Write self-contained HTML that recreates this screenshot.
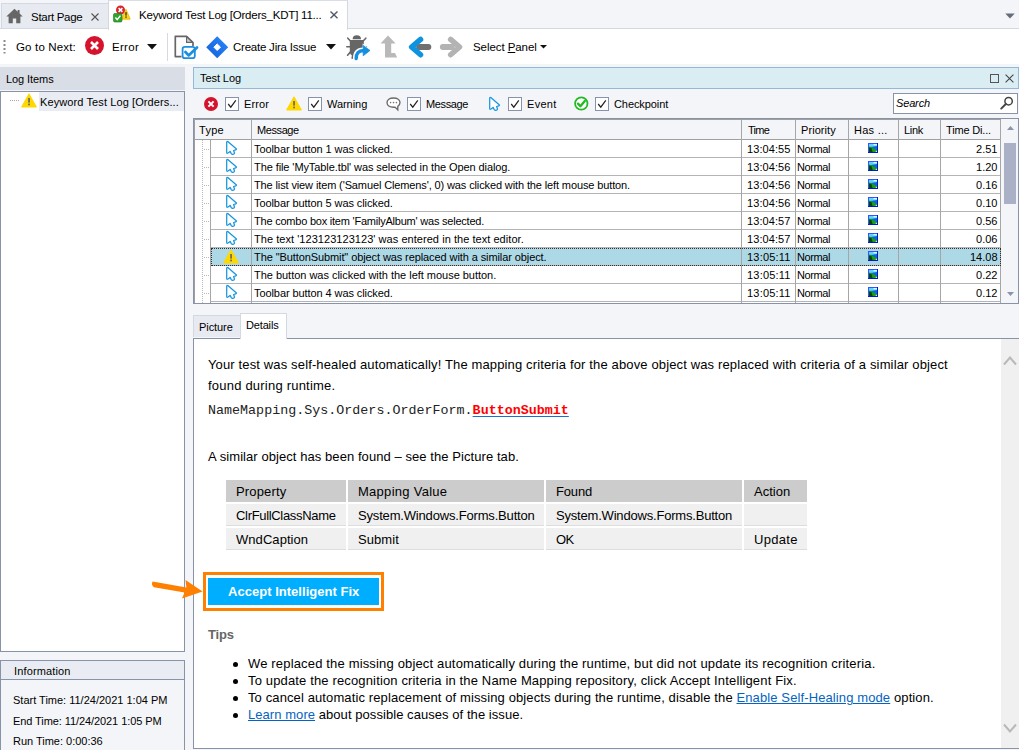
<!DOCTYPE html>
<html><head><meta charset="utf-8">
<style>
*{box-sizing:border-box;margin:0;padding:0}
html,body{width:1019px;height:750px;overflow:hidden;background:#f4f5f8;font-family:"Liberation Sans",sans-serif;font-size:11px;color:#000}
.abs{position:absolute}
#root{position:relative;width:1019px;height:750px;overflow:hidden;background:#f4f5f8}
.t{position:absolute;white-space:nowrap;line-height:14px;height:14px;font-size:11px}
.s{font-size:11.5px;line-height:16px;height:16px}
svg{position:absolute;overflow:visible}
.b{font-size:13px;line-height:17px;height:17px}
.m{font-family:"Liberation Mono",monospace;font-size:13.33px;line-height:17px;height:17px;color:#222}
.tr{height:22px;background:#f0f0f0;border-bottom:1px solid #ddd}
.bl{left:233px;width:5px;height:5px;border-radius:50%;background:#000}
.lk{color:#0563c1;text-decoration:underline}
/*LS*/
#x_tab1{letter-spacing:-0.294px}
#x_tab2{letter-spacing:-0.214px}
#x_goto{letter-spacing:0.163px}
#x_err1{letter-spacing:0.309px}
#x_jira{letter-spacing:-0.227px}
#x_sel{letter-spacing:-0.072px}
#x_logitems{letter-spacing:-0.077px}
#x_tree{letter-spacing:0.102px}
#x_testlog{letter-spacing:-0.071px}
#x_f1{letter-spacing:0.087px}
#x_f2{letter-spacing:-0.044px}
#x_f3{letter-spacing:-0.357px}
#x_f4{letter-spacing:0.290px}
#x_f5{letter-spacing:-0.083px}
#x_b1{letter-spacing:0.139px}
#x_b2{letter-spacing:0.212px}
#x_b3{letter-spacing:0.069px}
#x_mono{letter-spacing:0.020px}
#x_l1{letter-spacing:0.163px}
#x_l2{letter-spacing:0.148px}
#x_l3{letter-spacing:0.113px}
#x_l4{letter-spacing:0.059px}
#x_c00{letter-spacing:0.166px}
#x_c01{letter-spacing:0.278px}
#x_c02{letter-spacing:-0.169px}
#x_c03{letter-spacing:0.012px}
#x_c10{letter-spacing:-0.323px}
#x_c11{letter-spacing:-0.174px}
#x_c12{letter-spacing:-0.193px}
#x_c20{letter-spacing:0.061px}
#x_c21{letter-spacing:0.066px}
#x_c22{letter-spacing:-0.697px}
#x_c23{letter-spacing:0.316px}
#x_btn{letter-spacing:0.026px}
#x_h0{letter-spacing:0.280px}
#x_h1{letter-spacing:-0.407px}
#x_h2{letter-spacing:-0.700px}
#x_h3{letter-spacing:0.067px}
#x_h4{letter-spacing:0.267px}
#x_h5{letter-spacing:-0.329px}
#x_h6{letter-spacing:-0.173px}
#x_m0{letter-spacing:-0.084px}
#x_m1{letter-spacing:-0.085px}
#x_m2{letter-spacing:-0.121px}
#x_m3{letter-spacing:-0.084px}
#x_m4{letter-spacing:-0.220px}
#x_m5{letter-spacing:0.047px}
#x_m6{letter-spacing:-0.094px}
#x_m7{letter-spacing:-0.022px}
#x_m8{letter-spacing:-0.084px}
#x_t0{letter-spacing:0.082px}
#x_t1{letter-spacing:0.082px}
#x_t2{letter-spacing:0.082px}
#x_t3{letter-spacing:0.082px}
#x_t4{letter-spacing:0.082px}
#x_t5{letter-spacing:0.082px}
#x_t6{letter-spacing:0.198px}
#x_t7{letter-spacing:0.198px}
#x_t8{letter-spacing:0.198px}
#x_p0{letter-spacing:-0.411px}
#x_p1{letter-spacing:-0.411px}
#x_p2{letter-spacing:-0.411px}
#x_p3{letter-spacing:-0.411px}
#x_p4{letter-spacing:-0.411px}
#x_p5{letter-spacing:-0.411px}
#x_p6{letter-spacing:-0.411px}
#x_p7{letter-spacing:-0.411px}
#x_p8{letter-spacing:-0.411px}
#x_info{letter-spacing:0.137px}
#x_start{letter-spacing:-0.003px}
#x_end{letter-spacing:-0.083px}
#x_run{letter-spacing:-0.012px}
#x_pic{letter-spacing:-0.075px}
#x_det{letter-spacing:-0.154px}
#x_search{letter-spacing:-0.152px}
#x_tips{letter-spacing:-0.200px}
/*END-LS*/
/* tab strip */
#tab1{left:1px;top:3px;width:108px;height:25px;background:#e7eaf1;border:1px solid #d3d8e2;border-bottom:none}
#tab2{left:108px;top:0;width:240px;height:30px;background:#fff;border-right:1px solid #d3d8e2;border-left:1px solid #d3d8e2;border-top:1px solid #d9dde6}
#toolbar{left:0;top:28px;width:1019px;height:36px;background:#fff;border-top:1px solid #d3d8e3}
/* left */
#lhead{left:0;top:67px;width:185px;height:23px;background:#d9dde6}
#ltree{left:0;top:91px;width:185px;height:561px;background:#fff;border:1px solid #8893aa}
#info{left:0;top:660px;width:185px;height:95px;background:#f4f5f8;border:1px solid #8893aa}
#infoh{left:0;top:0;width:183px;height:19px;background:#e9ecf2;border-bottom:1px solid #8893aa}
/* right */
#rhead{left:193px;top:67px;width:826px;height:22px;background:#daedf3;border:1px solid #93b9d6}
.cb{position:absolute;top:97px;width:14px;height:14px;background:#fff;border:1px solid #8893aa}
#search{left:893px;top:93px;width:125px;height:21px;background:#fff;border:1px solid #8893aa}
#grid{left:193px;top:118px;width:826px;height:186px;background:#fff;border:1px solid #8893aa;overflow:hidden}
#details{left:193px;top:338px;width:826px;height:411px;background:#fff;border:1px solid #8893aa;border-right:none}
</style></head><body><div id="root">
<!-- TOP -->
<div id="tab1" class="abs"></div>
<div id="toolbar" class="abs"></div>
<div id="tab2" class="abs"></div>
<svg style="left:6px;top:8px" width="17" height="16" viewBox="0 0 17 16"><path d="M8.5 0.8 L0.3 8.6 H2.6 V15.2 H6.8 V10.4 H10.2 V15.2 H14.4 V8.6 H16.7 L13.6 5.6 V2 H11.6 V3.7 Z" fill="#666"/></svg>
<div class="t s" id="x_tab1" style="left:31px;top:9px">Start Page</div>
<svg style="left:91px;top:13px" width="8" height="8" viewBox="0 0 8 8"><path d="M0.5 0.5 L7.5 7.5 M7.5 0.5 L0.5 7.5" stroke="#555" stroke-width="1.1" fill="none"/></svg>
<!-- tab2 icon -->
<svg style="left:113px;top:5px" width="19" height="18" viewBox="0 0 19 18">
<path d="M13 4.2 L17.2 14.2 H8.6 Z" fill="#ffd800" stroke="#d9a900" stroke-width="0.7" stroke-linejoin="round"/><rect x="12.3" y="7.2" width="1.4" height="3.4" fill="#333"/><rect x="12.3" y="11.4" width="1.4" height="1.4" fill="#333"/>
<circle cx="7.5" cy="5" r="4.5" fill="#d9232e"/><path d="M5.6 3.1 L9.4 6.9 M9.4 3.1 L5.6 6.9" stroke="#fff" stroke-width="1.5"/>
<rect x="0.5" y="8.5" width="8.5" height="8.5" rx="1.2" fill="#2fa32f" stroke="#1c7a1c" stroke-width="0.6"/><path d="M2.4 12.6 L4.2 14.6 L7.4 10.6" stroke="#fff" stroke-width="1.5" fill="none"/>
</svg>
<div class="t s" id="x_tab2" style="left:139px;top:7px">Keyword Test Log [Orders_KDT] 11...</div>
<svg style="left:330px;top:11px" width="8" height="8" viewBox="0 0 8 8"><path d="M0.5 0.5 L7.5 7.3 M7.5 0.5 L0.5 7.3" stroke="#505a68" stroke-width="1.4" fill="none"/></svg>
<svg style="left:1004.6px;top:13px" width="10" height="6" viewBox="0 0 10 6"><path d="M0.3 0.5 H9.7 L5 5.5 Z" fill="#656d7a"/></svg>
<!-- toolbar -->
<svg style="left:3px;top:39px" width="3" height="16" viewBox="0 0 3 16"><g fill="#8a8a8a"><rect x="0.5" y="1" width="2" height="2"/><rect x="0.5" y="5" width="2" height="2"/><rect x="0.5" y="9" width="2" height="2"/><rect x="0.5" y="13" width="2" height="1.5"/></g></svg>
<div class="t s" id="x_goto" style="left:16px;top:39px">Go to Next:</div>
<svg style="left:85px;top:36px" width="19" height="19" viewBox="0 0 19 19"><circle cx="9.5" cy="9.5" r="9.5" fill="#d5132d"/><path d="M6 6 L13 13 M13 6 L6 13" stroke="#fff" stroke-width="2.6" stroke-linecap="butt"/></svg>
<div class="t s" id="x_err1" style="left:112px;top:39px">Error</div>
<svg style="left:147px;top:44px" width="10" height="6" viewBox="0 0 10 6"><path d="M0 0 H10 L5 5.6 Z" fill="#111"/></svg>
<div class="abs" style="left:167px;top:33px;width:1px;height:28px;background:#d6d9df"></div>
<!-- doc+check -->
<svg style="left:174px;top:35px" width="25" height="25" viewBox="0 0 25 25">
<path d="M13 1.3 V7 H19 Z" fill="#d4d4d4"/>
<path d="M7.5 21.6 H1.3 V1.3 H12.6 L19 7.6 V11" fill="none" stroke="#666" stroke-width="1.7" stroke-linejoin="round"/>
<path d="M12.6 1.6 V7.4 H18.8" fill="none" stroke="#666" stroke-width="1.2"/>
<rect x="8.6" y="11.8" width="12.2" height="11.4" rx="2.2" fill="#fff" stroke="#1b8fdc" stroke-width="1.8"/>
<path d="M11.4 17 L14.6 20.4 L23 12.4" fill="none" stroke="#1b8fdc" stroke-width="2.7" stroke-linecap="round" stroke-linejoin="round"/>
</svg>
<!-- jira -->
<svg style="left:206px;top:36px" width="23" height="23" viewBox="0 0 23 23"><defs><linearGradient id="jg" x1="0" y1="1" x2="1" y2="0"><stop offset="0" stop-color="#1560d6"/><stop offset="1" stop-color="#2b86ff"/></linearGradient></defs><path d="M11.2 0.2 L22.2 11.2 L11.2 22.2 L0.2 11.2 Z" fill="url(#jg)"/><path d="M11.2 7.9 L14.5 11.2 L11.2 14.5 L7.9 11.2 Z" fill="#fff" stroke="#fff" stroke-width="1" stroke-linejoin="round"/></svg>
<div class="t s" id="x_jira" style="left:233px;top:39px">Create Jira Issue</div>
<svg style="left:326px;top:44px" width="10" height="6" viewBox="0 0 10 6"><path d="M0 0 H10 L5 5.6 Z" fill="#111"/></svg>
<!-- bug -->
<svg style="left:346px;top:35px" width="25" height="25" viewBox="0 0 25 25">
<g stroke="#666" stroke-width="1.6" fill="none" stroke-linecap="round"><path d="M5.4 7 L1.8 3.2"/><path d="M16.2 7 L19.8 3.2"/><path d="M4 11.8 H0.8"/><path d="M5 16.2 L1.6 20.2"/><path d="M7 19 L6.2 23.2"/><path d="M17.6 11.8 H20.4"/></g>
<path d="M6.6 4.2 A4.2 4 0 0 1 15 4.2 Z" fill="#666"/>
<path d="M3.8 5 H17.8 V12 L9 20.4 H6 Q3.8 19.4 3.8 17 Z" fill="#666"/>
<path d="M9.8 24 Q9.6 15.6 17.4 15.4" fill="none" stroke="#fff" stroke-width="5.6"/>
<path d="M16.6 8.6 L25.6 15.5 L16.6 22.6 Z" fill="#fff"/>
<path d="M10.2 23.6 Q10 15.6 17.6 15.5" fill="none" stroke="#1490e0" stroke-width="3.4" stroke-linecap="round"/>
<path d="M17.2 10.4 L24 15.5 L17.2 20.8 Z" fill="#1490e0" stroke="#1490e0" stroke-width="0.8" stroke-linejoin="round"/>
</svg>
<!-- up-left gray -->
<svg style="left:380px;top:35px" width="18" height="23" viewBox="0 0 18 23"><path d="M8 0.6 L15.6 8.6 H11.2 V18 H15 L17.2 22.6 H5 V8.6 H0.5 Z" fill="#b9b9b9"/></svg>
<!-- blue left -->
<svg style="left:408px;top:36px" width="24" height="22" viewBox="0 0 24 22"><path d="M11 11 H20.4" stroke="#707070" stroke-width="5.8" stroke-linecap="round"/><path d="M12.6 3.4 L3.6 11 L12.6 18.8" fill="none" stroke="#0d93e0" stroke-width="5.4" stroke-linejoin="round" stroke-linecap="round"/></svg>
<!-- gray right -->
<svg style="left:439px;top:36px" width="24" height="22" viewBox="0 0 24 22"><path d="M3.8 11 H13" stroke="#b3b3b3" stroke-width="5.8" stroke-linecap="round"/><path d="M11.6 3.4 L20.6 11 L11.6 18.8" fill="none" stroke="#b3b3b3" stroke-width="5.4" stroke-linejoin="round" stroke-linecap="round"/></svg>
<div class="t s" id="x_sel" style="left:473px;top:39px">Select <u>P</u>anel</div>
<svg style="left:540px;top:45px" width="7" height="4" viewBox="0 0 7 4"><path d="M0 0 H7 L3.5 3.6 Z" fill="#111"/></svg>
<div id="lhead" class="abs"></div>
<div class="t" id="x_logitems" style="left:6px;top:72px">Log Items</div>
<div id="ltree" class="abs"></div>
<div class="abs" style="left:39px;top:92px;width:145px;height:19px;background:#e9ecf2"></div>
<svg style="left:9px;top:100px" width="11" height="1" viewBox="0 0 11 1"><path d="M1 0.5 H11" stroke="#a8a8a8" stroke-width="1" stroke-dasharray="1 1"/></svg>
<svg style="left:21px;top:93px" width="16" height="15" viewBox="0 0 16 15"><path d="M8 0.8 L15.4 14 H0.6 Z" fill="#ffd800" stroke="#ffd800" stroke-width="1" stroke-linejoin="round"/><rect x="7.2" y="5" width="1.7" height="4.6" fill="#666"/><rect x="7.2" y="10.6" width="1.7" height="1.7" fill="#666"/></svg>
<div class="t" id="x_tree" style="left:40px;top:95px">Keyword Test Log [Orders...</div>
<div id="info" class="abs"><div id="infoh" class="abs"></div></div>
<div class="t" id="x_info" style="left:14px;top:664px">Information</div>
<div class="t" id="x_start" style="left:13px;top:693px">Start Time: 11/24/2021 1:04 PM</div>
<div class="t" id="x_end" style="left:13px;top:714px">End Time: 11/24/2021 1:05 PM</div>
<div class="t" id="x_run" style="left:13px;top:734px">Run Time: 0:00:36</div>
<!--LEFT-END-->
<!--RIGHT-->
<div id="rhead" class="abs"></div>
<div class="t" id="x_testlog" style="left:200px;top:71px">Test Log</div>
<svg style="left:990px;top:74px" width="9" height="9" viewBox="0 0 9 9"><rect x="0.5" y="0.5" width="8" height="8" fill="none" stroke="#555" stroke-width="1"/></svg>
<svg style="left:1005px;top:74px" width="9" height="9" viewBox="0 0 9 9"><path d="M0.6 0.6 L8.4 8.4 M8.4 0.6 L0.6 8.4" stroke="#444" stroke-width="1.1" fill="none"/></svg>
<svg style="left:204px;top:97px" width="14" height="14" viewBox="0 0 14 14"><circle cx="7" cy="7" r="7" fill="#d5132d"/><path d="M4.4 4.4 L9.6 9.6 M9.6 4.4 L4.4 9.6" stroke="#fff" stroke-width="2"/></svg>
<div class="cb" style="left:225px"></div>
<div class="t" id="x_f1" style="left:244px;top:97px">Error</div>
<svg style="left:286px;top:96px" width="16" height="15" viewBox="0 0 16 15"><path d="M8 0.8 L15.4 14 H0.6 Z" fill="#ffd800" stroke="#ffd800" stroke-width="1" stroke-linejoin="round"/><rect x="7.2" y="5" width="1.7" height="4.6" fill="#666"/><rect x="7.2" y="10.6" width="1.7" height="1.7" fill="#666"/></svg>
<div class="cb" style="left:308px"></div>
<div class="t" id="x_f2" style="left:327px;top:97px">Warning</div>
<svg style="left:386px;top:97px" width="15" height="14" viewBox="0 0 15 14"><path d="M7.5 1 C3.6 1 1 3 1 5.6 C1 8.2 3.6 10.2 7.5 10.2 C8 10.2 8.5 10.15 9 10.1 L11.8 12.8 V9.4 C13.2 8.5 14 7.2 14 5.6 C14 3 11.4 1 7.5 1 Z" fill="#fff" stroke="#6a6a6a" stroke-width="1.35"/><circle cx="4.6" cy="5.6" r="0.8" fill="#777"/><circle cx="7.5" cy="5.6" r="0.8" fill="#777"/><circle cx="10.4" cy="5.6" r="0.8" fill="#777"/></svg>
<div class="cb" style="left:407px"></div>
<div class="t" id="x_f3" style="left:426px;top:97px">Message</div>
<svg style="left:489px;top:97px" width="11" height="14" viewBox="0 0 11 14"><path d="M0.7 1.2 Q0.7 0.2 1.8 0.6 L10.2 7.7 Q10.8 8.5 9.8 8.8 L7.6 9.5 L8.5 12 Q8.5 13 7 13.3 Q5.8 13.4 5.3 12.6 L4.1 10.4 L2 12 Q0.7 12.8 0.7 11.6 Z" fill="#fff" stroke="#1596e0" stroke-width="1.25" stroke-linejoin="round"/></svg>
<div class="cb" style="left:508px"></div>
<div class="t" id="x_f4" style="left:527px;top:97px">Event</div>
<svg style="left:574px;top:96px" width="15" height="15" viewBox="0 0 15 15"><circle cx="7.3" cy="7.5" r="6.2" fill="#fff" stroke="#22b922" stroke-width="1.8"/><path d="M4 7.6 L6.4 10.2 L10.8 5" fill="none" stroke="#22b922" stroke-width="2.3" stroke-linecap="round" stroke-linejoin="round"/></svg>
<div class="cb" style="left:595px"></div>
<div class="t" id="x_f5" style="left:614px;top:97px">Checkpoint</div>
<svg style="left:225px;top:97px" width="14" height="14" viewBox="0 0 14 14"><path d="M3.2 7 L5.8 10.2 L10.8 3.4" fill="none" stroke="#222" stroke-width="1.2"/></svg>
<svg style="left:308px;top:97px" width="14" height="14" viewBox="0 0 14 14"><path d="M3.2 7 L5.8 10.2 L10.8 3.4" fill="none" stroke="#222" stroke-width="1.2"/></svg>
<svg style="left:407px;top:97px" width="14" height="14" viewBox="0 0 14 14"><path d="M3.2 7 L5.8 10.2 L10.8 3.4" fill="none" stroke="#222" stroke-width="1.2"/></svg>
<svg style="left:508px;top:97px" width="14" height="14" viewBox="0 0 14 14"><path d="M3.2 7 L5.8 10.2 L10.8 3.4" fill="none" stroke="#222" stroke-width="1.2"/></svg>
<svg style="left:595px;top:97px" width="14" height="14" viewBox="0 0 14 14"><path d="M3.2 7 L5.8 10.2 L10.8 3.4" fill="none" stroke="#222" stroke-width="1.2"/></svg>
<div id="search" class="abs"></div>
<div class="t" id="x_search" style="left:896px;top:96px;font-style:italic">Search</div>
<svg style="left:1000px;top:96px" width="14" height="14" viewBox="0 0 14 14"><circle cx="8.6" cy="5.2" r="3.7" fill="none" stroke="#444" stroke-width="1.5"/><path d="M5.8 8 L1.2 12.6" stroke="#444" stroke-width="1.9" stroke-linecap="round"/></svg>
<div id="grid" class="abs"></div>
<div class="abs" style="left:194px;top:119px;width:807px;height:1px;background:#a0a0a0"></div>
<div class="abs" style="left:194px;top:119px;width:1px;height:184px;background:#a0a0a0"></div>
<div class="abs" style="left:195px;top:120px;width:806px;height:19px;background:#f4f5f8"></div>
<div class="abs" style="left:195px;top:139px;width:806px;height:1px;background:#a0a0a0"></div>
<div class="t" id="x_h0" style="left:199px;top:123px">Type</div>
<div class="t" id="x_h1" style="left:257px;top:123px">Message</div>
<div class="t" id="x_h2" style="left:748px;top:123px">Time</div>
<div class="t" id="x_h3" style="left:801px;top:123px">Priority</div>
<div class="t" id="x_h4" style="left:854px;top:123px">Has ...</div>
<div class="t" id="x_h5" style="left:904px;top:123px">Link</div>
<div class="t" id="x_h6" style="left:946px;top:123px">Time Di...</div>
<div class="abs" style="left:211px;top:248px;width:790px;height:18px;background:#add8e6"></div>
<div class="abs" style="left:211px;top:157px;width:790px;height:1px;background:#b4b4b4"></div>
<div class="abs" style="left:211px;top:175px;width:790px;height:1px;background:#b4b4b4"></div>
<div class="abs" style="left:211px;top:193px;width:790px;height:1px;background:#b4b4b4"></div>
<div class="abs" style="left:211px;top:211px;width:790px;height:1px;background:#b4b4b4"></div>
<div class="abs" style="left:211px;top:229px;width:790px;height:1px;background:#b4b4b4"></div>
<div class="abs" style="left:211px;top:247px;width:790px;height:1px;background:#b4b4b4"></div>
<div class="abs" style="left:211px;top:265px;width:790px;height:1px;background:#b4b4b4"></div>
<div class="abs" style="left:211px;top:283px;width:790px;height:1px;background:#b4b4b4"></div>
<div class="abs" style="left:211px;top:301px;width:790px;height:1px;background:#b4b4b4"></div>
<div class="abs" style="left:251px;top:120px;width:1px;height:183px;background:#a6a6a6"></div>
<div class="abs" style="left:741px;top:120px;width:1px;height:183px;background:#a6a6a6"></div>
<div class="abs" style="left:795px;top:120px;width:1px;height:183px;background:#a6a6a6"></div>
<div class="abs" style="left:848px;top:120px;width:1px;height:183px;background:#a6a6a6"></div>
<div class="abs" style="left:898px;top:120px;width:1px;height:183px;background:#a6a6a6"></div>
<div class="abs" style="left:940px;top:120px;width:1px;height:183px;background:#a6a6a6"></div>
<div class="abs" style="left:1000px;top:120px;width:1px;height:183px;background:#a6a6a6"></div>
<div class="abs" style="left:210px;top:140px;width:1px;height:163px;background:#a6a6a6"></div>
<div class="abs" style="left:211px;top:248px;width:790px;height:18px;border:1px dotted #3a2a2a"></div>
<svg style="left:202px;top:140px" width="8" height="163" viewBox="0 0 8 163"><path d="M0.5 0 V163" stroke="#b8b8b8" stroke-width="1" stroke-dasharray="1 1"/><path d="M2 9.5 H8" stroke="#b8b8b8" stroke-width="1" stroke-dasharray="1 1"/><path d="M2 27.5 H8" stroke="#b8b8b8" stroke-width="1" stroke-dasharray="1 1"/><path d="M2 45.5 H8" stroke="#b8b8b8" stroke-width="1" stroke-dasharray="1 1"/><path d="M2 63.5 H8" stroke="#b8b8b8" stroke-width="1" stroke-dasharray="1 1"/><path d="M2 81.5 H8" stroke="#b8b8b8" stroke-width="1" stroke-dasharray="1 1"/><path d="M2 99.5 H8" stroke="#b8b8b8" stroke-width="1" stroke-dasharray="1 1"/><path d="M2 117.5 H8" stroke="#b8b8b8" stroke-width="1" stroke-dasharray="1 1"/><path d="M2 135.5 H8" stroke="#b8b8b8" stroke-width="1" stroke-dasharray="1 1"/><path d="M2 153.5 H8" stroke="#b8b8b8" stroke-width="1" stroke-dasharray="1 1"/></svg>
<div class="abs" style="left:1001px;top:119px;width:17px;height:184px;background:#f4f5f8"></div>
<div class="abs" style="left:1004px;top:143px;width:12px;height:61px;background:#aab1c6"></div>
<svg style="left:1007px;top:126px" width="7" height="4" viewBox="0 0 7 4"><path d="M3.5 0 L7 4 H0 Z" fill="#8a93a8"/></svg>
<svg style="left:1007px;top:292px" width="7" height="4" viewBox="0 0 7 4"><path d="M0 0 H7 L3.5 4 Z" fill="#8a93a8"/></svg>
<svg style="left:226px;top:141px" width="11" height="14" viewBox="0 0 11 14"><path d="M0.7 1.2 Q0.7 0.2 1.8 0.6 L10.2 7.7 Q10.8 8.5 9.8 8.8 L7.6 9.5 L8.5 12 Q8.5 13 7 13.3 Q5.8 13.4 5.3 12.6 L4.1 10.4 L2 12 Q0.7 12.8 0.7 11.6 Z" fill="#fff" stroke="#1596e0" stroke-width="1.25" stroke-linejoin="round"/></svg>
<div class="t" id="x_m0" style="left:254px;top:142px">Toolbar button 1 was clicked.</div>
<div class="t" id="x_t0" style="left:747px;top:142px">13:04:55</div>
<div class="t" id="x_p0" style="left:797px;top:142px">Normal</div>
<svg style="left:868px;top:143px" width="10" height="10" viewBox="0 0 10 10"><rect x="0" y="0" width="10" height="10" fill="#3355ff"/><path d="M9 0 H10 V10 H0 V9 H9 Z" fill="#0018dc"/><rect x="1" y="1" width="8" height="8" fill="#0a6ad0"/><path d="M1 1 H9 V3 L1 4.2 Z" fill="#5fd0ff"/><path d="M5.5 1 H9 V2.6 L5.5 2.2 Z" fill="#c8ffff"/><path d="M1 3.4 L3 4 L9 7.2 V9 H1 Z" fill="#1f9a1f"/><path d="M1 4.5 L3.4 5 L4.6 9 H1 Z" fill="#024a02"/><path d="M7.2 9 L9 7.4 V9 Z" fill="#e6ff70"/></svg>
<div class="t" id="x_d0" style="right:21.5px;top:142px">2.51</div>
<svg style="left:226px;top:159px" width="11" height="14" viewBox="0 0 11 14"><path d="M0.7 1.2 Q0.7 0.2 1.8 0.6 L10.2 7.7 Q10.8 8.5 9.8 8.8 L7.6 9.5 L8.5 12 Q8.5 13 7 13.3 Q5.8 13.4 5.3 12.6 L4.1 10.4 L2 12 Q0.7 12.8 0.7 11.6 Z" fill="#fff" stroke="#1596e0" stroke-width="1.25" stroke-linejoin="round"/></svg>
<div class="t" id="x_m1" style="left:254px;top:160px">The file 'MyTable.tbl' was selected in the Open dialog.</div>
<div class="t" id="x_t1" style="left:747px;top:160px">13:04:56</div>
<div class="t" id="x_p1" style="left:797px;top:160px">Normal</div>
<svg style="left:868px;top:161px" width="10" height="10" viewBox="0 0 10 10"><rect x="0" y="0" width="10" height="10" fill="#3355ff"/><path d="M9 0 H10 V10 H0 V9 H9 Z" fill="#0018dc"/><rect x="1" y="1" width="8" height="8" fill="#0a6ad0"/><path d="M1 1 H9 V3 L1 4.2 Z" fill="#5fd0ff"/><path d="M5.5 1 H9 V2.6 L5.5 2.2 Z" fill="#c8ffff"/><path d="M1 3.4 L3 4 L9 7.2 V9 H1 Z" fill="#1f9a1f"/><path d="M1 4.5 L3.4 5 L4.6 9 H1 Z" fill="#024a02"/><path d="M7.2 9 L9 7.4 V9 Z" fill="#e6ff70"/></svg>
<div class="t" id="x_d1" style="right:21.5px;top:160px">1.20</div>
<svg style="left:226px;top:177px" width="11" height="14" viewBox="0 0 11 14"><path d="M0.7 1.2 Q0.7 0.2 1.8 0.6 L10.2 7.7 Q10.8 8.5 9.8 8.8 L7.6 9.5 L8.5 12 Q8.5 13 7 13.3 Q5.8 13.4 5.3 12.6 L4.1 10.4 L2 12 Q0.7 12.8 0.7 11.6 Z" fill="#fff" stroke="#1596e0" stroke-width="1.25" stroke-linejoin="round"/></svg>
<div class="t" id="x_m2" style="left:254px;top:178px">The list view item ('Samuel Clemens', 0) was clicked with the left mouse button.</div>
<div class="t" id="x_t2" style="left:747px;top:178px">13:04:56</div>
<div class="t" id="x_p2" style="left:797px;top:178px">Normal</div>
<svg style="left:868px;top:179px" width="10" height="10" viewBox="0 0 10 10"><rect x="0" y="0" width="10" height="10" fill="#3355ff"/><path d="M9 0 H10 V10 H0 V9 H9 Z" fill="#0018dc"/><rect x="1" y="1" width="8" height="8" fill="#0a6ad0"/><path d="M1 1 H9 V3 L1 4.2 Z" fill="#5fd0ff"/><path d="M5.5 1 H9 V2.6 L5.5 2.2 Z" fill="#c8ffff"/><path d="M1 3.4 L3 4 L9 7.2 V9 H1 Z" fill="#1f9a1f"/><path d="M1 4.5 L3.4 5 L4.6 9 H1 Z" fill="#024a02"/><path d="M7.2 9 L9 7.4 V9 Z" fill="#e6ff70"/></svg>
<div class="t" id="x_d2" style="right:21.5px;top:178px">0.16</div>
<svg style="left:226px;top:195px" width="11" height="14" viewBox="0 0 11 14"><path d="M0.7 1.2 Q0.7 0.2 1.8 0.6 L10.2 7.7 Q10.8 8.5 9.8 8.8 L7.6 9.5 L8.5 12 Q8.5 13 7 13.3 Q5.8 13.4 5.3 12.6 L4.1 10.4 L2 12 Q0.7 12.8 0.7 11.6 Z" fill="#fff" stroke="#1596e0" stroke-width="1.25" stroke-linejoin="round"/></svg>
<div class="t" id="x_m3" style="left:254px;top:196px">Toolbar button 5 was clicked.</div>
<div class="t" id="x_t3" style="left:747px;top:196px">13:04:56</div>
<div class="t" id="x_p3" style="left:797px;top:196px">Normal</div>
<svg style="left:868px;top:197px" width="10" height="10" viewBox="0 0 10 10"><rect x="0" y="0" width="10" height="10" fill="#3355ff"/><path d="M9 0 H10 V10 H0 V9 H9 Z" fill="#0018dc"/><rect x="1" y="1" width="8" height="8" fill="#0a6ad0"/><path d="M1 1 H9 V3 L1 4.2 Z" fill="#5fd0ff"/><path d="M5.5 1 H9 V2.6 L5.5 2.2 Z" fill="#c8ffff"/><path d="M1 3.4 L3 4 L9 7.2 V9 H1 Z" fill="#1f9a1f"/><path d="M1 4.5 L3.4 5 L4.6 9 H1 Z" fill="#024a02"/><path d="M7.2 9 L9 7.4 V9 Z" fill="#e6ff70"/></svg>
<div class="t" id="x_d3" style="right:21.5px;top:196px">0.10</div>
<svg style="left:226px;top:213px" width="11" height="14" viewBox="0 0 11 14"><path d="M0.7 1.2 Q0.7 0.2 1.8 0.6 L10.2 7.7 Q10.8 8.5 9.8 8.8 L7.6 9.5 L8.5 12 Q8.5 13 7 13.3 Q5.8 13.4 5.3 12.6 L4.1 10.4 L2 12 Q0.7 12.8 0.7 11.6 Z" fill="#fff" stroke="#1596e0" stroke-width="1.25" stroke-linejoin="round"/></svg>
<div class="t" id="x_m4" style="left:254px;top:214px">The combo box item 'FamilyAlbum' was selected.</div>
<div class="t" id="x_t4" style="left:747px;top:214px">13:04:57</div>
<div class="t" id="x_p4" style="left:797px;top:214px">Normal</div>
<svg style="left:868px;top:215px" width="10" height="10" viewBox="0 0 10 10"><rect x="0" y="0" width="10" height="10" fill="#3355ff"/><path d="M9 0 H10 V10 H0 V9 H9 Z" fill="#0018dc"/><rect x="1" y="1" width="8" height="8" fill="#0a6ad0"/><path d="M1 1 H9 V3 L1 4.2 Z" fill="#5fd0ff"/><path d="M5.5 1 H9 V2.6 L5.5 2.2 Z" fill="#c8ffff"/><path d="M1 3.4 L3 4 L9 7.2 V9 H1 Z" fill="#1f9a1f"/><path d="M1 4.5 L3.4 5 L4.6 9 H1 Z" fill="#024a02"/><path d="M7.2 9 L9 7.4 V9 Z" fill="#e6ff70"/></svg>
<div class="t" id="x_d4" style="right:21.5px;top:214px">0.56</div>
<svg style="left:226px;top:231px" width="11" height="14" viewBox="0 0 11 14"><path d="M0.7 1.2 Q0.7 0.2 1.8 0.6 L10.2 7.7 Q10.8 8.5 9.8 8.8 L7.6 9.5 L8.5 12 Q8.5 13 7 13.3 Q5.8 13.4 5.3 12.6 L4.1 10.4 L2 12 Q0.7 12.8 0.7 11.6 Z" fill="#fff" stroke="#1596e0" stroke-width="1.25" stroke-linejoin="round"/></svg>
<div class="t" id="x_m5" style="left:254px;top:232px">The text '123123123123' was entered in the text editor.</div>
<div class="t" id="x_t5" style="left:747px;top:232px">13:04:57</div>
<div class="t" id="x_p5" style="left:797px;top:232px">Normal</div>
<svg style="left:868px;top:233px" width="10" height="10" viewBox="0 0 10 10"><rect x="0" y="0" width="10" height="10" fill="#3355ff"/><path d="M9 0 H10 V10 H0 V9 H9 Z" fill="#0018dc"/><rect x="1" y="1" width="8" height="8" fill="#0a6ad0"/><path d="M1 1 H9 V3 L1 4.2 Z" fill="#5fd0ff"/><path d="M5.5 1 H9 V2.6 L5.5 2.2 Z" fill="#c8ffff"/><path d="M1 3.4 L3 4 L9 7.2 V9 H1 Z" fill="#1f9a1f"/><path d="M1 4.5 L3.4 5 L4.6 9 H1 Z" fill="#024a02"/><path d="M7.2 9 L9 7.4 V9 Z" fill="#e6ff70"/></svg>
<div class="t" id="x_d5" style="right:21.5px;top:232px">0.06</div>
<svg style="left:223px;top:249px" width="16" height="15" viewBox="0 0 16 15"><path d="M8 0.8 L15.4 14 H0.6 Z" fill="#ffd800" stroke="#ffd800" stroke-width="1" stroke-linejoin="round"/><rect x="7.2" y="5" width="1.7" height="4.6" fill="#666"/><rect x="7.2" y="10.6" width="1.7" height="1.7" fill="#666"/></svg>
<div class="t" id="x_m6" style="left:254px;top:250px">The &quot;ButtonSubmit&quot; object was replaced with a similar object.</div>
<div class="t" id="x_t6" style="left:747px;top:250px">13:05:11</div>
<div class="t" id="x_p6" style="left:797px;top:250px">Normal</div>
<svg style="left:868px;top:251px" width="10" height="10" viewBox="0 0 10 10"><rect x="0" y="0" width="10" height="10" fill="#3355ff"/><path d="M9 0 H10 V10 H0 V9 H9 Z" fill="#0018dc"/><rect x="1" y="1" width="8" height="8" fill="#0a6ad0"/><path d="M1 1 H9 V3 L1 4.2 Z" fill="#5fd0ff"/><path d="M5.5 1 H9 V2.6 L5.5 2.2 Z" fill="#c8ffff"/><path d="M1 3.4 L3 4 L9 7.2 V9 H1 Z" fill="#1f9a1f"/><path d="M1 4.5 L3.4 5 L4.6 9 H1 Z" fill="#024a02"/><path d="M7.2 9 L9 7.4 V9 Z" fill="#e6ff70"/></svg>
<div class="t" id="x_d6" style="right:21.5px;top:250px">14.08</div>
<svg style="left:226px;top:267px" width="11" height="14" viewBox="0 0 11 14"><path d="M0.7 1.2 Q0.7 0.2 1.8 0.6 L10.2 7.7 Q10.8 8.5 9.8 8.8 L7.6 9.5 L8.5 12 Q8.5 13 7 13.3 Q5.8 13.4 5.3 12.6 L4.1 10.4 L2 12 Q0.7 12.8 0.7 11.6 Z" fill="#fff" stroke="#1596e0" stroke-width="1.25" stroke-linejoin="round"/></svg>
<div class="t" id="x_m7" style="left:254px;top:268px">The button was clicked with the left mouse button.</div>
<div class="t" id="x_t7" style="left:747px;top:268px">13:05:11</div>
<div class="t" id="x_p7" style="left:797px;top:268px">Normal</div>
<svg style="left:868px;top:269px" width="10" height="10" viewBox="0 0 10 10"><rect x="0" y="0" width="10" height="10" fill="#3355ff"/><path d="M9 0 H10 V10 H0 V9 H9 Z" fill="#0018dc"/><rect x="1" y="1" width="8" height="8" fill="#0a6ad0"/><path d="M1 1 H9 V3 L1 4.2 Z" fill="#5fd0ff"/><path d="M5.5 1 H9 V2.6 L5.5 2.2 Z" fill="#c8ffff"/><path d="M1 3.4 L3 4 L9 7.2 V9 H1 Z" fill="#1f9a1f"/><path d="M1 4.5 L3.4 5 L4.6 9 H1 Z" fill="#024a02"/><path d="M7.2 9 L9 7.4 V9 Z" fill="#e6ff70"/></svg>
<div class="t" id="x_d7" style="right:21.5px;top:268px">0.22</div>
<svg style="left:226px;top:285px" width="11" height="14" viewBox="0 0 11 14"><path d="M0.7 1.2 Q0.7 0.2 1.8 0.6 L10.2 7.7 Q10.8 8.5 9.8 8.8 L7.6 9.5 L8.5 12 Q8.5 13 7 13.3 Q5.8 13.4 5.3 12.6 L4.1 10.4 L2 12 Q0.7 12.8 0.7 11.6 Z" fill="#fff" stroke="#1596e0" stroke-width="1.25" stroke-linejoin="round"/></svg>
<div class="t" id="x_m8" style="left:254px;top:286px">Toolbar button 4 was clicked.</div>
<div class="t" id="x_t8" style="left:747px;top:286px">13:05:11</div>
<div class="t" id="x_p8" style="left:797px;top:286px">Normal</div>
<svg style="left:868px;top:287px" width="10" height="10" viewBox="0 0 10 10"><rect x="0" y="0" width="10" height="10" fill="#3355ff"/><path d="M9 0 H10 V10 H0 V9 H9 Z" fill="#0018dc"/><rect x="1" y="1" width="8" height="8" fill="#0a6ad0"/><path d="M1 1 H9 V3 L1 4.2 Z" fill="#5fd0ff"/><path d="M5.5 1 H9 V2.6 L5.5 2.2 Z" fill="#c8ffff"/><path d="M1 3.4 L3 4 L9 7.2 V9 H1 Z" fill="#1f9a1f"/><path d="M1 4.5 L3.4 5 L4.6 9 H1 Z" fill="#024a02"/><path d="M7.2 9 L9 7.4 V9 Z" fill="#e6ff70"/></svg>
<div class="t" id="x_d8" style="right:21.5px;top:286px">0.12</div>
<!--RIGHT-END-->
<!--DETAILS-->
<div class="abs" style="left:193px;top:315px;width:48px;height:22px;background:#e7eaf1;border:1px solid #d3d8e2;border-bottom:none"></div>
<div id="details" class="abs"></div>
<div class="abs" style="left:240px;top:313px;width:47px;height:26px;background:#fff;border:1px solid #d3d8e2;border-bottom:none"></div>
<div class="t" id="x_pic" style="left:199px;top:320px">Picture</div>
<div class="t" id="x_det" style="left:246px;top:318px">Details</div>
<div class="abs" style="left:1001px;top:339px;width:18px;height:409px;background:#f0f0f0"></div>
<svg style="left:1003px;top:355px" width="14" height="11" viewBox="0 0 14 11"><path d="M1 9.5 L7 2.6 L13 9.5" fill="none" stroke="#b9b9b9" stroke-width="2"/></svg>
<svg style="left:1003px;top:723px" width="14" height="11" viewBox="0 0 14 11"><path d="M1 1.5 L7 8.4 L13 1.5" fill="none" stroke="#b9b9b9" stroke-width="2"/></svg>
<div class="t b" id="x_b1" style="left:208px;top:356px">Your test was self-healed automatically! The mapping criteria for the above object was replaced with criteria of a similar object</div>
<div class="t b" id="x_b2" style="left:208px;top:377px">found during runtime.</div>
<div class="t m" id="x_mono" style="left:208px;top:402px">NameMapping.Sys.Orders.OrderForm.<span style="color:#f00;font-weight:bold;text-decoration:underline;text-decoration-color:#1a6fd0;text-decoration-thickness:1px;text-underline-offset:1.5px">ButtonSubmit</span></div>
<div class="t b" id="x_b3" style="left:208px;top:448px">A similar object has been found – see the Picture tab.</div>
<!-- table -->
<div class="abs" style="left:226px;top:480px;width:120px;height:22px;background:#ccc"></div>
<div class="abs" style="left:348px;top:480px;width:196px;height:22px;background:#ccc"></div>
<div class="abs" style="left:546px;top:480px;width:196px;height:22px;background:#ccc"></div>
<div class="abs" style="left:744px;top:480px;width:63px;height:22px;background:#ccc"></div>
<div class="abs tr" style="left:226px;top:504px;width:120px"></div>
<div class="abs tr" style="left:348px;top:504px;width:196px"></div>
<div class="abs tr" style="left:546px;top:504px;width:196px"></div>
<div class="abs tr" style="left:744px;top:504px;width:63px"></div>
<div class="abs tr" style="left:226px;top:528px;width:120px"></div>
<div class="abs tr" style="left:348px;top:528px;width:196px"></div>
<div class="abs tr" style="left:546px;top:528px;width:196px"></div>
<div class="abs tr" style="left:744px;top:528px;width:63px"></div>
<div class="t b" id="x_c00" style="left:236px;top:483px">Property</div>
<div class="t b" id="x_c01" style="left:358px;top:483px">Mapping Value</div>
<div class="t b" id="x_c02" style="left:556px;top:483px">Found</div>
<div class="t b" id="x_c03" style="left:754px;top:483px">Action</div>
<div class="t b" id="x_c10" style="left:236px;top:507px">ClrFullClassName</div>
<div class="t b" id="x_c11" style="left:358px;top:507px">System.Windows.Forms.Button</div>
<div class="t b" id="x_c12" style="left:556px;top:507px">System.Windows.Forms.Button</div>
<div class="t b" id="x_c20" style="left:236px;top:531px">WndCaption</div>
<div class="t b" id="x_c21" style="left:358px;top:531px">Submit</div>
<div class="t b" id="x_c22" style="left:556px;top:531px">OK</div>
<div class="t b" id="x_c23" style="left:754px;top:531px">Update</div>
<!-- button -->
<div class="abs" style="left:203px;top:572px;width:181px;height:39px;border:3px solid #ff8000;background:#fff"></div>
<div class="abs" style="left:208px;top:578px;width:171px;height:27px;background:#00aeff"></div>
<div class="t b" id="x_btn" style="left:228px;top:583px;color:#fff;font-weight:bold">Accept Intelligent Fix</div>
<svg style="left:150px;top:575.5px" width="56" height="26" viewBox="150 575 56 26"><path d="M152.6 580.6 Q150.8 584 154 586.2 L184.5 591.4 L182 597.4 L202.6 590.5 L185.5 579 L186.4 586.4 Z" fill="#ff8000"/></svg>
<div class="t b" id="x_tips" style="left:208px;top:626px;color:#666;font-weight:bold">Tips</div>
<div class="abs bl" style="top:662px"></div><div class="abs bl" style="top:679px"></div><div class="abs bl" style="top:696px"></div><div class="abs bl" style="top:713px"></div>
<div class="t b" id="x_l1" style="left:248px;top:655px">We replaced the missing object automatically during the runtime, but did not update its recognition criteria.</div>
<div class="t b" id="x_l2" style="left:248px;top:672px">To update the recognition criteria in the Name Mapping repository, click Accept Intelligent Fix.</div>
<div class="t b" id="x_l3" style="left:248px;top:689px">To cancel automatic replacement of missing objects during the runtime, disable the <span class="lk">Enable Self-Healing mode</span> option.</div>
<div class="t b" id="x_l4" style="left:248px;top:706px"><span class="lk">Learn more</span> about possible causes of the issue.</div>
<!--DETAILS-END-->
</div></body></html>
